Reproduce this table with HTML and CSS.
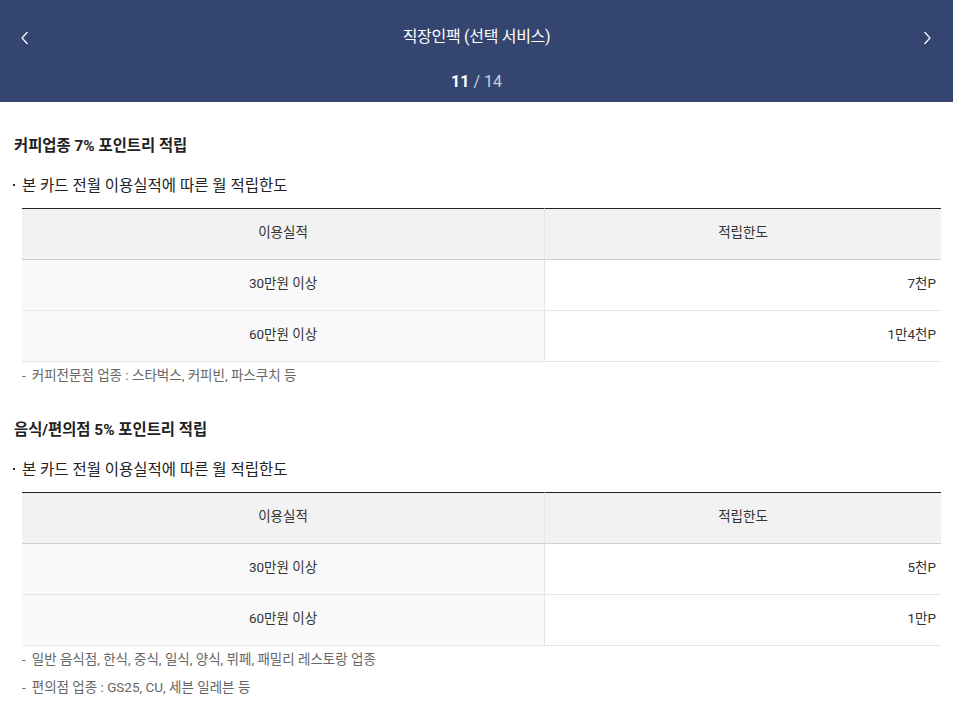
FILE: index.html
```html
<!DOCTYPE html>
<html lang="ko">
<head>
<meta charset="utf-8">
<title>직장인팩 (선택 서비스)</title>
<link rel="stylesheet" href="styles.css">
</head>
<body>
<header class="top">
  <div class="top-row">
    <button class="nav nav-prev" aria-label="이전">
      <svg width="8" height="14" viewBox="0 0 8 14"><polyline points="6.5,1 1,7 6.5,13" fill="none" stroke="#fff" stroke-width="1.2"/></svg>
    </button>
    <h1 class="title">직장인팩 (선택 서비스)</h1>
    <button class="nav nav-next" aria-label="다음">
      <svg width="8" height="14" viewBox="0 0 8 14"><polyline points="1.5,1 7,7 1.5,13" fill="none" stroke="#fff" stroke-width="1.2"/></svg>
    </button>
  </div>
  <div class="counter"><strong>11</strong> / 14</div>
</header>

<main class="content">
  <section class="block">
    <h2 class="block-title">커피업종 7% 포인트리 적립</h2>
    <p class="bullet">본 카드 전월 이용실적에 따른 월 적립한도</p>
    <table class="limit">
      <thead>
        <tr><th class="c-left">이용실적</th><th class="c-right">적립한도</th></tr>
      </thead>
      <tbody>
        <tr><td class="c-left">30만원 이상</td><td class="c-right num">7천P</td></tr>
        <tr><td class="c-left">60만원 이상</td><td class="c-right num">1만4천P</td></tr>
      </tbody>
    </table>
    <p class="note"><span class="dash">-</span>커피전문점 업종 : 스타벅스, 커피빈, 파스쿠치 등</p>
  </section>

  <section class="block block-2">
    <h2 class="block-title">음식/편의점 5% 포인트리 적립</h2>
    <p class="bullet">본 카드 전월 이용실적에 따른 월 적립한도</p>
    <table class="limit">
      <thead>
        <tr><th class="c-left">이용실적</th><th class="c-right">적립한도</th></tr>
      </thead>
      <tbody>
        <tr><td class="c-left">30만원 이상</td><td class="c-right num">5천P</td></tr>
        <tr><td class="c-left">60만원 이상</td><td class="c-right num">1만P</td></tr>
      </tbody>
    </table>
    <p class="note"><span class="dash">-</span>일반 음식점, 한식, 중식, 일식, 양식, 뷔페, 패밀리 레스토랑 업종</p>
    <p class="note"><span class="dash">-</span>편의점 업종 : GS25, CU, 세븐 일레븐 등</p>
  </section>
</main>
</body>
</html>
```

FILE: styles.css
```css
* { box-sizing: border-box; }
html, body { margin: 0; padding: 0; background: #fff; }
body {
  font-family: Roboto, "Noto Sans CJK KR", sans-serif;
  color: #222;
  width: 953px;
  overflow: hidden;
}

.top {
  background: #34466f;
  color: #fff;
  height: 102px;
  padding: 25px 0 9px;
  display: flex;
  flex-direction: column;
  gap: 20px;
}
.top-row {
  display: flex;
  align-items: center;
  height: 24px;
}
.nav {
  background: none;
  border: 0;
  padding: 0;
  width: 60px;
  height: 24px;
  display: flex;
  align-items: center;
  cursor: pointer;
}
.nav svg { display: block; margin-top: 2px; }
.nav-prev { justify-content: flex-start; padding-left: 21px; }
.nav-next { justify-content: flex-end; padding-right: 22px; }
.title {
  flex: 1;
  margin: 0;
  text-align: center;
  font-size: 16px;
  font-weight: 400;
  line-height: 24px;
  letter-spacing: -0.3px;
}
.counter {
  text-align: center;
  font-size: 16px;
  line-height: 24px;
  color: #c9cfdc;
  margin-top: 1px;
}
.counter strong { color: #fff; font-weight: 700; }

.content { padding: 33px 12px 0 14px; }

.block-2 { margin-top: 30px; }

.block-title {
  margin: 0;
  font-size: 15.4px;
  line-height: 22px;
  font-weight: 700;
  color: #222;
}
.bullet {
  margin: 18px 0 0;
  font-size: 15.5px;
  line-height: 22px;
  color: #222;
  display: flex;
  align-items: center;
}
.bullet::before {
  content: "";
  width: 2px;
  height: 2px;
  background: #333;
  margin: 0 7px 3px -1px;
  flex: none;
}

.limit {
  margin: 11px 0 0 8px;
  width: 919px;
  border-collapse: separate;
  border-spacing: 0;
  table-layout: fixed;
  font-size: 13.5px;
  color: #333;
}
.limit th, .limit td {
  height: 51px;
  padding: 0 5px 6px;
  font-weight: 400;
  border-bottom: 1px solid #e6e6e6;
  vertical-align: middle;
}
.limit th {
  height: 52px;
  padding-bottom: 7px;
  background: #f2f2f2;
  border-top: 1px solid #222;
  border-bottom-color: #cfcfcf;
  text-align: center;
}
.limit .c-left { width: 522px; }
.limit .c-right { border-left: 1px solid #e6e6e6; }
.limit td.c-left { background: #f9f9f9; text-align: center; }
.limit td.num { text-align: right; background: #fff; }

.note {
  margin: 0 0 0 8px;
  font-size: 13.5px;
  line-height: 28px;
  color: #666;
}
.limit + .note { margin-top: -1px; }
.note .dash { margin-right: 6px; }
```
